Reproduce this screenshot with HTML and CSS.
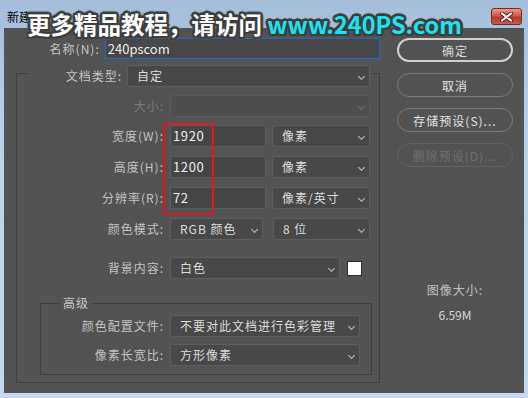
FILE: index.html
```html
<!DOCTYPE html>
<html lang="zh-CN">

<head>
    <meta charset="UTF-8">
    <title>新建</title>
    <link rel="stylesheet" href="styles.css">
</head>

<body>

    <div class="window">
        <div class="titlebar">
            <span class="title">新建</span>
            <span class="close">
                <svg width="15" height="10" viewBox="0 0 15 10">
                    <path d="M3 1.5 L12 8.5 M12 1.5 L3 8.5" stroke="#5a1a14" stroke-width="4" stroke-linecap="round" />
                    <path d="M3 1.5 L12 8.5 M12 1.5 L3 8.5" stroke="#fff" stroke-width="2.2" stroke-linecap="round" />
                </svg>
            </span>
        </div>

        <div class="panel">
            <div class="main">
                <div class="row row_name">
                    <label class="lbl">名称(N):</label>
                    <div class="field field_name">240pscom</div>
                </div>

                <div class="group">
                    <div class="row group_head">
                        <label class="lbl">文档类型:</label>
                        <div class="select sel_type">自定<i class="chev"></i></div>
                    </div>

                    <div class="row r_size">
                        <label class="lbl off">大小:</label>
                        <div class="select off sel_wide"><i class="chev"></i></div>
                    </div>

                    <div class="row r_gap">
                        <label class="lbl">宽度(W):</label>
                        <div class="field field_num">1920</div>
                        <div class="select sel_unit">像素<i class="chev"></i></div>
                    </div>

                    <div class="row r_gap">
                        <label class="lbl">高度(H):</label>
                        <div class="field field_num">1200</div>
                        <div class="select sel_unit">像素<i class="chev"></i></div>
                    </div>

                    <div class="row r_gap">
                        <label class="lbl">分辨率(R):</label>
                        <div class="field field_num">72</div>
                        <div class="select sel_unit">像素/英寸<i class="chev"></i></div>
                    </div>

                    <div class="row r_gap">
                        <label class="lbl">颜色模式:</label>
                        <div class="select sel_mode">RGB 颜色<i class="chev"></i></div>
                        <div class="select sel_bits">8 位<i class="chev"></i></div>
                    </div>

                    <div class="row r_bg">
                        <label class="lbl">背景内容:</label>
                        <div class="select sel_bg">白色<i class="chev"></i></div>
                        <span class="swatch"></span>
                    </div>

                    <div class="subgroup">
                        <span class="legend">高级</span>
                        <div class="row r_sub1">
                            <label class="lbl">颜色配置文件:</label>
                            <div class="select sel_sub">不要对此文档进行色彩管理<i class="chev"></i></div>
                        </div>
                        <div class="row r_sub2">
                            <label class="lbl">像素长宽比:</label>
                            <div class="select sel_sub">方形像素<i class="chev"></i></div>
                        </div>
                    </div>
                </div>
            </div>

            <div class="side">
                <button class="btn btn_default">确定</button>
                <button class="btn">取消</button>
                <button class="btn">存储预设(S)...</button>
                <button class="btn btn_off">删除预设(D)...</button>

                <div class="info">
                    <p class="info_lbl">图像大小:</p>
                    <p class="info_val">6.59M</p>
                </div>
            </div>

            <div class="mark"></div>
        </div>

        <div class="banner">更多精品教程，请访问 <span class="url">www.240PS.com</span></div>
    </div>

</body>

</html>
```

FILE: styles.css
```css
body {
    margin: 0;
    font-family: "Noto Sans CJK SC", "Noto Sans", sans-serif;
}

.window {
    position: relative;
    width: 528px;
    height: 398px;
    background: linear-gradient(#a4bedb, #bcd3ec 40%, #c4d9f0);
    overflow: hidden;
}

.titlebar {
    display: flex;
    justify-content: space-between;
    height: 28px;
    padding: 0 6px 0 7px;
    box-sizing: border-box;
}

.title {
    font-size: 12px;
    line-height: 16px;
    padding-top: 9px;
    color: #000;
}

.close {
    display: flex;
    align-items: center;
    justify-content: center;
    width: 31px;
    height: 17px;
    margin-top: 8px;
    box-sizing: border-box;
    border: 1px solid #7c2a22;
    border-radius: 3px;
    background: linear-gradient(#e89a8c, #d0564a 45%, #b8392e 55%, #c9584c);
}

.panel {
    position: relative;
    display: flex;
    height: 365px;
    margin: 0 4px;
    background: #535353;
    color: #c4c4c4;
    font-size: 12px;
}

.main {
    width: 376px;
    padding-top: 10px;
}

.row {
    display: flex;
    align-items: center;
    height: 22px;
}

.lbl {
    text-align: right;
    letter-spacing: 1px;
    line-height: 22px;
    white-space: nowrap;
    color: #c2c2c2;
}

.lbl.off {
    color: #7a7a7a;
}

/* name row */
.row_name {
    height: 21px;
}

.row_name .lbl {
    width: 96px;
    margin-right: 5px;
}

.field {
    height: 100%;
    box-sizing: border-box;
    background: #454545;
    border: 1px solid #5c5c5c;
    color: #ececec;
    font-size: 13px;
    line-height: 19px;
    padding-left: 2px;
}

.field_name {
    width: 276px;
    border-color: #2466cf;
    background: #474747;
}

.field_num {
    width: 96px;
    margin-right: 6px;
    letter-spacing: 0.6px;
}

.select {
    position: relative;
    height: 100%;
    box-sizing: border-box;
    background: #484848;
    border: 1px solid #5d5d5d;
    border-radius: 3px;
    color: #dcdcdc;
    line-height: 20px;
    padding-left: 9px;
    letter-spacing: 1px;
    white-space: nowrap;
}

.select.off {
    background: #4e4e4e;
    border-color: #5b5b5b;
}

.chev {
    position: absolute;
    right: 5px;
    top: 8px;
    width: 4px;
    height: 4px;
    border-right: 1px solid #bdbdbd;
    border-bottom: 1px solid #bdbdbd;
    transform: rotate(45deg);
}

.select.off .chev {
    border-color: #6e6e6e;
}

/* outer group */
.group {
    width: 364px;
    height: 310px;
    margin: 14px 0 0 12px;
    box-sizing: border-box;
    border: 1px solid #3f3f3f;
}

.group_head {
    width: 344px;
    margin: -9px 0 0 11px;
    background: #535353;
}

.group_head .lbl {
    width: 94px;
    margin-right: 5px;
}

.sel_type {
    width: 243px;
}

.group .row .lbl {
    flex: none;
}

.r_size .lbl,
.r_gap .lbl,
.r_bg .lbl {
    width: 147px;
    margin-right: 6px;
}

.r_size {
    margin-top: 8px;
}

.r_gap {
    margin-top: 8px;
}

.r_gap + .r_gap {
    margin-top: 9px;
}

.sel_wide {
    width: 200px;
}

.sel_unit {
    width: 98px;
}

.sel_mode {
    width: 93px;
    margin-right: 10px;
}

.sel_bits {
    width: 97px;
}

.r_bg {
    margin-top: 17px;
}

.sel_bg {
    width: 170px;
    margin-right: 7px;
}

.swatch {
    width: 15px;
    height: 15px;
    box-sizing: border-box;
    background: #fff;
    border: 1px solid #2e2e2e;
}

/* advanced group */
.subgroup {
    width: 332px;
    height: 72px;
    margin: 24px 0 0 23px;
    box-sizing: border-box;
    border: 1px solid #3f3f3f;
}

.legend {
    display: block;
    width: max-content;
    height: 16px;
    margin: -9px 0 0 19px;
    padding: 0 3px;
    line-height: 16px;
    letter-spacing: 1px;
    background: #535353;
    color: #c8c8c8;
}

.subgroup .lbl {
    width: 123px;
    margin-right: 6px;
}

.r_sub1 {
    margin-top: 4px;
}

.r_sub2 {
    margin-top: 7px;
}

.sel_sub {
    width: 190px;
}

/* right column */
.side {
    display: flex;
    flex-direction: column;
    width: 144px;
    padding: 10px 0 0 17px;
    box-sizing: border-box;
}

.btn {
    width: 116px;
    height: 24px;
    margin-bottom: 11px;
    padding: 0;
    font-family: inherit;
    font-size: 12px;
    letter-spacing: 1px;
    color: #e2e2e2;
    background: #535353;
    border: 1px solid #7b7b7b;
    border-radius: 12px;
}

.btn_default {
    border: 2px solid #cfcfcf;
    color: #d6d6d6;
}

.btn_off {
    border-color: #626262;
    color: #707070;
}

.info {
    margin-top: 104px;
    width: 116px;
    text-align: center;
}

.info p {
    margin: 0;
    line-height: 16px;
}

.info_lbl {
    letter-spacing: 1px;
    color: #c0c0c0;
}

.info_val {
    margin-top: 9px !important;
    color: #d4d4d4;
}

/* red annotation box */
.mark {
    position: absolute;
    left: 159px;
    top: 95px;
    width: 51px;
    height: 92px;
    box-sizing: border-box;
    border: 2px solid #e3161d;
}

/* watermark banner */
.banner {
    position: absolute;
    left: 27px;
    top: 8px;
    font-size: 23.5px;
    font-weight: 700;
    line-height: 32px;
    color: #fff;
    white-space: nowrap;
    text-shadow:
        2px 0 0 #3e3e3e, -2px 0 0 #3e3e3e, 0 2px 0 #3e3e3e, 0 -2px 0 #3e3e3e,
        2px 2px 0 #3e3e3e, -2px 2px 0 #3e3e3e, 2px -2px 0 #3e3e3e, -2px -2px 0 #3e3e3e,
        3px 0 1px #555, -3px 0 1px #555, 0 3px 1px #555, 0 -3px 1px #555;
}

.url {
    color: #1de2f0;
}
```
